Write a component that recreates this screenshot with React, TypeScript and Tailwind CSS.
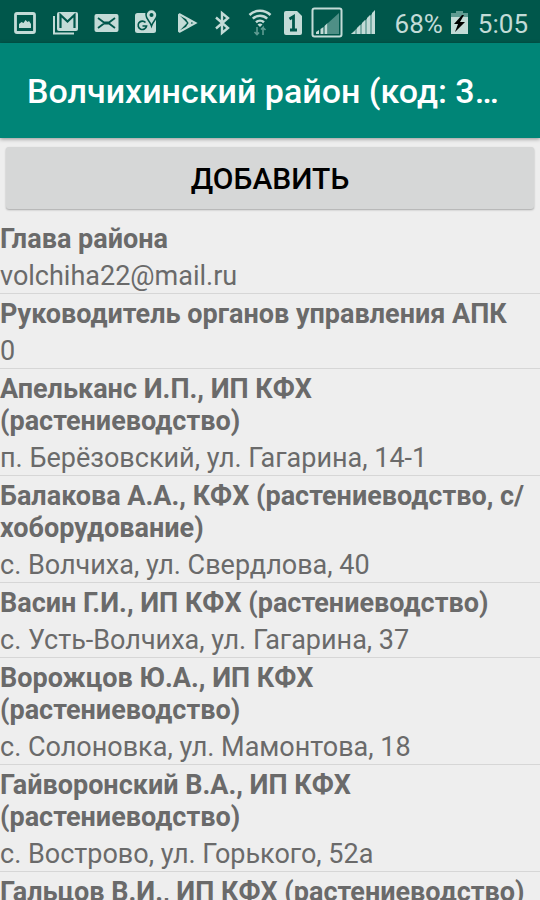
import type { ReactNode } from 'react'

interface Contact {
  name: string
  details: string
}

const contacts: Contact[] = [
  { name: 'Глава района', details: 'volchiha22@mail.ru' },
  { name: 'Руководитель органов управления АПК', details: '0' },
  { name: 'Апельканс И.П., ИП КФХ (растениеводство)', details: 'п. Берёзовский, ул. Гагарина, 14-1' },
  { name: 'Балакова А.А., КФХ (растениеводство, с/хоборудование)', details: 'с. Волчиха, ул. Свердлова, 40' },
  { name: 'Васин Г.И., ИП КФХ (растениеводство)', details: 'с. Усть-Волчиха, ул. Гагарина, 37' },
  { name: 'Ворожцов Ю.А., ИП КФХ (растениеводство)', details: 'с. Солоновка, ул. Мамонтова, 18' },
  { name: 'Гайворонский В.А., ИП КФХ (растениеводство)', details: 'с. Вострово, ул. Горького, 52а' },
  { name: 'Гальцов В.И., ИП КФХ (растениеводство)', details: '' },
]

function Glyph({ label, className, viewBox, children }: {
  label: string
  className: string
  viewBox: string
  children: ReactNode
}) {
  return (
    <svg role="img" aria-label={label} className={`shrink-0 ${className}`} viewBox={viewBox} fill="currentColor">
      {children}
    </svg>
  )
}

function StatusBar() {
  return (
    <div className="flex h-[43px] items-center justify-between bg-[#00574b] pr-3 pl-3.5 pt-0.5 text-[#c3dbd7]">
      <div className="flex items-center gap-4">
        <Glyph label="Screenshot" className="h-[30px] w-[22px]" viewBox="0 0 22 30">
          <rect x="1.5" y="5.5" width="19" height="19" rx="1.5" fill="none" stroke="currentColor" strokeWidth="2.8" />
          <path d="M5 20v-4l2.500-2 2 1 2-3 2 2 1.500-1 2 3v4z" />
        </Glyph>
        <Glyph label="Gmail" className="h-[30px] w-[26px]" viewBox="0 0 26 30">
          <path d="M2 8v17.500h20" fill="none" stroke="currentColor" strokeWidth="2" />
          <rect x="5" y="4" width="21" height="19" rx="2" />
          <path d="M8.500 20V7l7 6.500 7-6.500v13" fill="none" stroke="#00574b" strokeWidth="2.200" />
        </Glyph>
        <Glyph label="Mail" className="h-[30px] w-[25px]" viewBox="0 0 25 30">
          <rect x="0.500" y="6" width="24" height="18" rx="2" />
          <path d="M4 10l6 4.500h5l6-4.500M4 20l6-4.500h5l6 4.500" fill="none" stroke="#00574b" strokeWidth="1.800" />
        </Glyph>
        <Glyph label="Maps" className="h-[30px] w-[23px]" viewBox="0 0 23 30">
          <rect x="0" y="5" width="21" height="20" rx="2.500" />
          <path d="M10.500 14.500A4.200 4.200 0 1 0 11.500 18H7.500" fill="none" stroke="#00574b" strokeWidth="1.700" />
          <path d="M16.500 1.500a5.500 5.500 0 0 1 5.500 5.500c0 4-4 6-5.500 11-1.500-5-5.500-7-5.500-11a5.500 5.500 0 0 1 5.500-5.500z" stroke="#00574b" strokeWidth="1.500" />
          <circle cx="16.500" cy="7" r="2" fill="#00574b" />
        </Glyph>
        <Glyph label="Play" className="ml-1 h-[30px] w-[20px]" viewBox="0 0 20 30">
          <path d="M0 5.500l9 9.500-9 9.500z" />
          <path d="M1 6l16.500 9L1 24M9 11l4.500 6.500M9 19l4.500-6.500" fill="none" stroke="currentColor" strokeWidth="2" />
        </Glyph>
        <Glyph label="Bluetooth" className="h-[30px] w-[17px]" viewBox="0 0 17 30">
          <path d="M2 9.500l12 10.500-6 5V5l6 5L2 20.500" fill="none" stroke="currentColor" strokeWidth="2.400" />
        </Glyph>
      </div>
      <div className="flex items-center gap-2">
        <Glyph label="Wi-Fi" className="mr-1 h-[30px] w-[24px]" viewBox="0 0 24 30">
          <path d="M1.500 7a15 15 0 0 1 21 0M4.800 10.700a10.500 10.500 0 0 1 14.400 0M8 14.200a6 6 0 0 1 8 0" fill="none" stroke="currentColor" strokeWidth="2.500" />
          <path d="M9.500 16.500q2.500-2 5 0L12 19z" />
          <path d="M9 19v7.500M6.500 24l2.500 2.500 2-2M15 27v-7.500l-2 2M15 19.500l2.500 2.500" fill="none" stroke="#5f9b92" strokeWidth="1.600" />
        </Glyph>
        <Glyph label="SIM 1" className="h-[30px] w-[19px]" viewBox="0 0 19 30">
          <path d="M2 3h11l5 5v17q0 2-2 2H2q-2 0-2-2V5q0-2 2-2z" />
          <path d="M5.500 11l4-2.500v14M6 22h7" fill="none" stroke="#00574b" strokeWidth="2.800" />
        </Glyph>
        <Glyph label="Signal 1" className="h-[32px] w-[32px]" viewBox="0 0 32 32">
          <rect x="1.500" y="1.500" width="29" height="28" rx="2" fill="none" stroke="currentColor" strokeWidth="2" />
          <path d="M17 16L28 6v21H17z" fill="#4f8f86" />
          <path d="M5 27v-2l3-2v4zM9.500 27v-5l3-2v7zM13.500 27v-8l3-3v11z" />
        </Glyph>
        <Glyph label="Signal 2" className="h-[30px] w-[24px]" viewBox="0 0 24 30">
          <path d="M0 26L24 3v23z" fill="#7daea7" />
          <path d="M0 26l4-3v3zM6 26v-6l3-3v9zM11 26V15l3-3v14zM16 26V10l3-3v19zM21 26V5l3-3v24z" />
        </Glyph>
        <span className="ml-3 pt-0.5 text-[26px] leading-8">68%</span>
        <Glyph label="Charging" className="h-[30px] w-[17px]" viewBox="0 0 17 30">
          <path d="M5 3h7v2h5v8H0V5h5z" fill="#5f9b92" />
          <path d="M0 9h17v17H0z" />
          <path d="M11 7L3 16h4l-3 8 10-10H9l4-7z" fill="#000" />
        </Glyph>
        <span className="ml-0.5 pt-0.5 text-[26px] leading-8">5:05</span>
      </div>
    </div>
  )
}

export default function App() {
  return (
    <div className="h-screen overflow-hidden bg-[#eeeeee] font-['Roboto',sans-serif] text-[#6a6a6a]">
      <StatusBar />
      <header className="flex h-[95px] items-center bg-[#008577] px-[27px] shadow-[0_1px_4px_rgba(0,0,0,0.4)]">
        <h1 className="truncate text-[34px] leading-10 font-medium text-white">Волчихинский район (код: 3…</h1>
      </header>

      <main>
        <div className="px-1.5 pt-[9px] pb-2.5">
          <button
            type="button"
            className="h-[62px] w-full rounded-[3px] bg-[#d6d7d7] text-[30px] font-medium text-black shadow-[0_1px_2px_rgba(0,0,0,0.3)]"
          >
            ДОБАВИТЬ
          </button>
        </div>

        {/* Contacts of the district */}
        <ul>
          {contacts.map((contact) => (
            <li key={contact.name} className="border-b border-[#d6d6d6] pt-1 pb-px">
              <h2 className="text-[27px] leading-8 font-bold">{contact.name}</h2>
              <p className="mt-[5px] text-[27px] leading-8">{contact.details}</p>
            </li>
          ))}
        </ul>
      </main>
    </div>
  )
}
